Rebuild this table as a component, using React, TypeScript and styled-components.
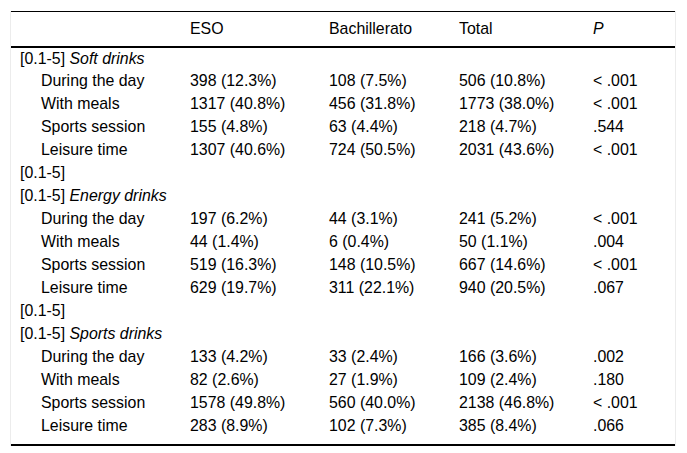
import React from "react";
import styled, { createGlobalStyle } from "styled-components";

const GlobalStyle = createGlobalStyle`
    html, body {
        margin: 0;
        padding: 0;
        background: #fff;
    }
    body {
        font-family: "Liberation Sans", Arial, sans-serif;
        color: #000;
    }
`;

type Row = { label: string; cells?: string[]; kind: "group" | "item" | "blank"; em?: string };

const rows: Row[] = [
    { kind: "group", label: "[0.1-5]", em: "Soft drinks" },
    { kind: "item", label: "During the day", cells: ["398 (12.3%)", "108 (7.5%)", "506 (10.8%)", "< .001"] },
    { kind: "item", label: "With meals", cells: ["1317 (40.8%)", "456 (31.8%)", "1773 (38.0%)", "< .001"] },
    { kind: "item", label: "Sports session", cells: ["155 (4.8%)", "63 (4.4%)", "218 (4.7%)", ".544"] },
    { kind: "item", label: "Leisure time", cells: ["1307 (40.6%)", "724 (50.5%)", "2031 (43.6%)", "< .001"] },
    { kind: "blank", label: "[0.1-5]" },
    { kind: "group", label: "[0.1-5]", em: "Energy drinks" },
    { kind: "item", label: "During the day", cells: ["197 (6.2%)", "44 (3.1%)", "241 (5.2%)", "< .001"] },
    { kind: "item", label: "With meals", cells: ["44 (1.4%)", "6 (0.4%)", "50 (1.1%)", ".004"] },
    { kind: "item", label: "Sports session", cells: ["519 (16.3%)", "148 (10.5%)", "667 (14.6%)", "< .001"] },
    { kind: "item", label: "Leisure time", cells: ["629 (19.7%)", "311 (22.1%)", "940 (20.5%)", ".067"] },
    { kind: "blank", label: "[0.1-5]" },
    { kind: "group", label: "[0.1-5]", em: "Sports drinks" },
    { kind: "item", label: "During the day", cells: ["133 (4.2%)", "33 (2.4%)", "166 (3.6%)", ".002"] },
    { kind: "item", label: "With meals", cells: ["82 (2.6%)", "27 (1.9%)", "109 (2.4%)", ".180"] },
    { kind: "item", label: "Sports session", cells: ["1578 (49.8%)", "560 (40.0%)", "2138 (46.8%)", "< .001"] },
    { kind: "item", label: "Leisure time", cells: ["283 (8.9%)", "102 (7.3%)", "385 (8.4%)", ".066"] },
];

const App = () => {
    return <Page>
        <GlobalStyle/>
        <Frame>
            <Table>
                <colgroup>
                    <col style={{ width: 170 }}/>
                    <col style={{ width: 139 }}/>
                    <col style={{ width: 130 }}/>
                    <col style={{ width: 134 }}/>
                    <col style={{ width: 91 }}/>
                </colgroup>
                <thead>
                    <tr>
                        <Th></Th>
                        <Th>ESO</Th>
                        <Th>Bachillerato</Th>
                        <Th>Total</Th>
                        <Th><i>P</i></Th>
                    </tr>
                </thead>
                <tbody>
                    {rows.map((r, i) => (
                        <BodyRow key={i}>
                            <Td indent={r.kind === "item"}>
                                {r.label}{r.em && <> <i>{r.em}</i></>}
                            </Td>
                            {[0, 1, 2, 3].map(c => <Td key={c}>{r.cells ? r.cells[c] : ""}</Td>)}
                        </BodyRow>
                    ))}
                </tbody>
            </Table>
        </Frame>
    </Page>
}

export default App;

const Page = styled.div`
    width: 687px;
    height: 453px;
    padding: 11px 0 0 10px;
    box-sizing: border-box;
`

const Frame = styled.div`
    width: 666px;
    border-left: 1px solid #ececec;
    border-right: 1px solid #ececec;
    box-sizing: border-box;
`

const Table = styled.table`
    width: 664px;
    border-collapse: collapse;
    table-layout: fixed;
    font-size: 15.9px;
    line-height: 18px;
    border-top: 1px solid #000;
    border-bottom: 2px solid #000;
`

const Th = styled.th`
    text-align: left;
    font-weight: normal;
    height: 35px;
    padding: 8px 9px 0;
    box-sizing: border-box;
    vertical-align: top;
    border-bottom: 2px solid #000;
    white-space: nowrap;
`

const BodyRow = styled.tr`
    &:last-child td {
        height: 30px;
        padding-bottom: 7px;
    }
`

const Td = styled.td<{ indent?: boolean }>`
    height: 23px;
    padding: 0 0 0 ${props => props.indent ? "30px" : "9px"};
    box-sizing: border-box;
    white-space: nowrap;
    vertical-align: middle;
`
